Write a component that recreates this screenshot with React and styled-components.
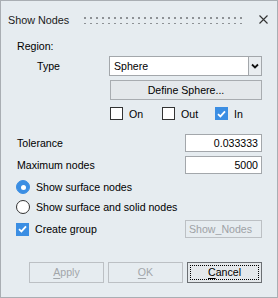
import React from "react";
import styled, { createGlobalStyle, css } from "styled-components";

const Global = createGlobalStyle`
  html, body { margin: 0; padding: 0; background: #e6ecf0; }
  * { box-sizing: border-box; }
`;

const font = `font-family: "Liberation Sans", Arial, sans-serif; font-size: 10.6px;`;

const Window = styled.div`
  ${font}
  width: 278px;
  height: 298px;
  background: #e6ecf0;
  border: 1px solid #a9aeb3;
  display: flex;
  flex-direction: column;
  color: #000;
`;

const TitleBar = styled.div`
  height: 37px;
  display: flex;
  align-items: center;
  padding: 0 9px 0 7px;
`;

const Title = styled.div`
  font-size: 10.8px;
  color: #1a1a1a;
  white-space: nowrap;
`;

const Grip = styled.div`
  flex: 1;
  height: 8px;
  margin: 0 15px 0 14px;
  background-image: radial-gradient(circle, #8d9195 0 1px, transparent 1.01px);
  background-size: 6px 6px;
  background-repeat: repeat;
  background-position: -1px -1px;
`;

const Close = styled.svg`
  width: 9px;
  height: 9px;
  flex: none;
`;

const Body = styled.div`
  padding: 0 15px 0 15px;
  display: flex;
  flex-direction: column;
`;

const Label = styled.div`
  height: ${(p) => p.$h || 16}px;
  line-height: ${(p) => p.$h || 16}px;
  white-space: nowrap;
  padding-left: ${(p) => p.$indent || 0}px;
`;

const FieldRow = styled.div`
  display: grid;
  grid-template-columns: ${(p) => p.$cols || "93px 1fr"};
  align-items: center;
  margin-top: ${(p) => p.$mt || 0}px;
`;

const SelectBox = styled.div`
  height: 20px;
  display: flex;
`;

const SelectValue = styled.div`
  flex: 1;
  background: #fff;
  border: 1px solid #a3a7ab;
  border-right: none;
  padding-left: 4px;
  line-height: 18px;
`;

const SelectArrow = styled.div`
  width: 14px;
  border: 1px solid #a3a7ab;
  background: #e9edf0;
  display: flex;
  align-items: center;
  justify-content: center;
`;

const Offset = styled.div`
  margin-left: 94px;
  margin-top: ${(p) => p.$mt || 0}px;
`;

const Button = styled.div`
  height: ${(p) => p.$h || 20}px;
  width: ${(p) => (p.$w ? p.$w + "px" : "auto")};
  border: 1px solid ${(p) => (p.$disabled ? "#bcc0c4" : p.$focus ? "#6b6f73" : "#a8acb0")};
  background: ${(p) => (p.$disabled ? "#e6ecf0" : "#e4e8eb")};
  color: ${(p) => (p.$disabled ? "#a2a6aa" : "#000")};
  display: flex;
  align-items: center;
  justify-content: center;
  position: relative;
  line-height: 1;
  ${(p) =>
    p.$focus &&
    css`
      &::after {
        content: "";
        position: absolute;
        inset: 2px;
        border: 1px dotted #000;
      }
    `}
`;

const Mnemonic = styled.span`
  text-decoration: underline;
  text-underline-offset: 2px;
`;

const CheckRow = styled.div`
  display: grid;
  grid-template-columns: 52px 53px auto;
  margin-left: 94px;
  margin-top: 7px;
`;

const Option = styled.div`
  display: flex;
  align-items: center;
  gap: 6px;
  height: ${(p) => p.$h || 13}px;
  margin-top: ${(p) => p.$mt || 0}px;
  white-space: nowrap;
`;

const Box = styled.div`
  width: 13px;
  height: 13px;
  flex: none;
  border: 1px solid ${(p) => (p.$checked ? "#3b8ee3" : "#333")};
  background: ${(p) => (p.$checked ? "#3b8ee3" : "#fff")};
  display: flex;
  align-items: center;
  justify-content: center;
`;

const Radio = styled.div`
  width: 14px;
  height: 14px;
  flex: none;
  border-radius: 50%;
  border: 1px solid ${(p) => (p.$checked ? "#3b8ee3" : "#333")};
  background: ${(p) => (p.$checked ? "#3b8ee3" : "#fff")};
  display: flex;
  align-items: center;
  justify-content: center;
  &::after {
    content: "";
    width: 5px;
    height: 5px;
    border-radius: 50%;
    background: ${(p) => (p.$checked ? "#fff" : "transparent")};
  }
`;

const TextInput = styled.div`
  height: 18px;
  width: 77px;
  border: 1px solid ${(p) => (p.$disabled ? "#bcc0c4" : "#a3a7ab")};
  background: ${(p) => (p.$disabled ? "#e6ecf0" : "#fff")};
  color: ${(p) => (p.$disabled ? "#9ea2a6" : "#000")};
  text-align: ${(p) => (p.$left ? "left" : "right")};
  padding: 0 3px;
  line-height: 16px;
  justify-self: end;
`;

const Footer = styled.div`
  display: flex;
  justify-content: flex-end;
  gap: 4px;
  margin-top: 24px;
`;

const Check = () => (
  <svg width="9" height="8" viewBox="0 0 9 8">
    <path d="M1 4.2 L3.4 6.4 L8 1.4" fill="none" stroke="#fff" strokeWidth="1.8" />
  </svg>
);

export default function App() {
  return (
    <>
      <Global />
      <Window>
        <TitleBar>
          <Title>Show Nodes</Title>
          <Grip />
          <Close viewBox="0 0 9 9">
            <path d="M0.5 0.5 L8.5 8.5 M8.5 0.5 L0.5 8.5" stroke="#333" strokeWidth="1.1" />
          </Close>
        </TitleBar>
        <Body>
          <Label $h={16} $indent={1}>Region:</Label>
          <FieldRow $mt={2}>
            <Label $indent={21}>Type</Label>
            <SelectBox>
              <SelectValue>Sphere</SelectValue>
              <SelectArrow>
                <svg width="8" height="6" viewBox="0 0 8 6">
                  <path d="M1 1.5 L4 4.5 L7 1.5" fill="none" stroke="#111" strokeWidth="1.8" />
                </svg>
              </SelectArrow>
            </SelectBox>
          </FieldRow>
          <Offset $mt={4}>
            <Button>Define Sphere...</Button>
          </Offset>
          <CheckRow>
            <Option>
              <Box />
              On
            </Option>
            <Option>
              <Box />
              Out
            </Option>
            <Option>
              <Box $checked>
                <Check />
              </Box>
              In
            </Option>
          </CheckRow>
          <FieldRow $cols="1fr auto" $mt={14}>
            <Label $indent={1}>Tolerance</Label>
            <TextInput>0.033333</TextInput>
          </FieldRow>
          <FieldRow $cols="1fr auto" $mt={4}>
            <Label $indent={1}>Maximum nodes</Label>
            <TextInput>5000</TextInput>
          </FieldRow>
          <Option $h={14} $mt={6}>
            <Radio $checked />
            Show surface nodes
          </Option>
          <Option $h={14} $mt={6}>
            <Radio />
            Show surface and solid nodes
          </Option>
          <FieldRow $cols="1fr auto" $mt={6}>
            <Option>
              <Box $checked>
                <Check />
              </Box>
              Create group
            </Option>
            <TextInput $disabled $left>Show_Nodes</TextInput>
          </FieldRow>
          <Footer>
            <Button $w={75} $h={21} $disabled>
              <Mnemonic>A</Mnemonic>pply
            </Button>
            <Button $w={75} $h={21} $disabled>
              <Mnemonic>O</Mnemonic>K
            </Button>
            <Button $w={75} $h={21} $focus>
              <Mnemonic>C</Mnemonic>ancel
            </Button>
          </Footer>
        </Body>
      </Window>
    </>
  );
}
